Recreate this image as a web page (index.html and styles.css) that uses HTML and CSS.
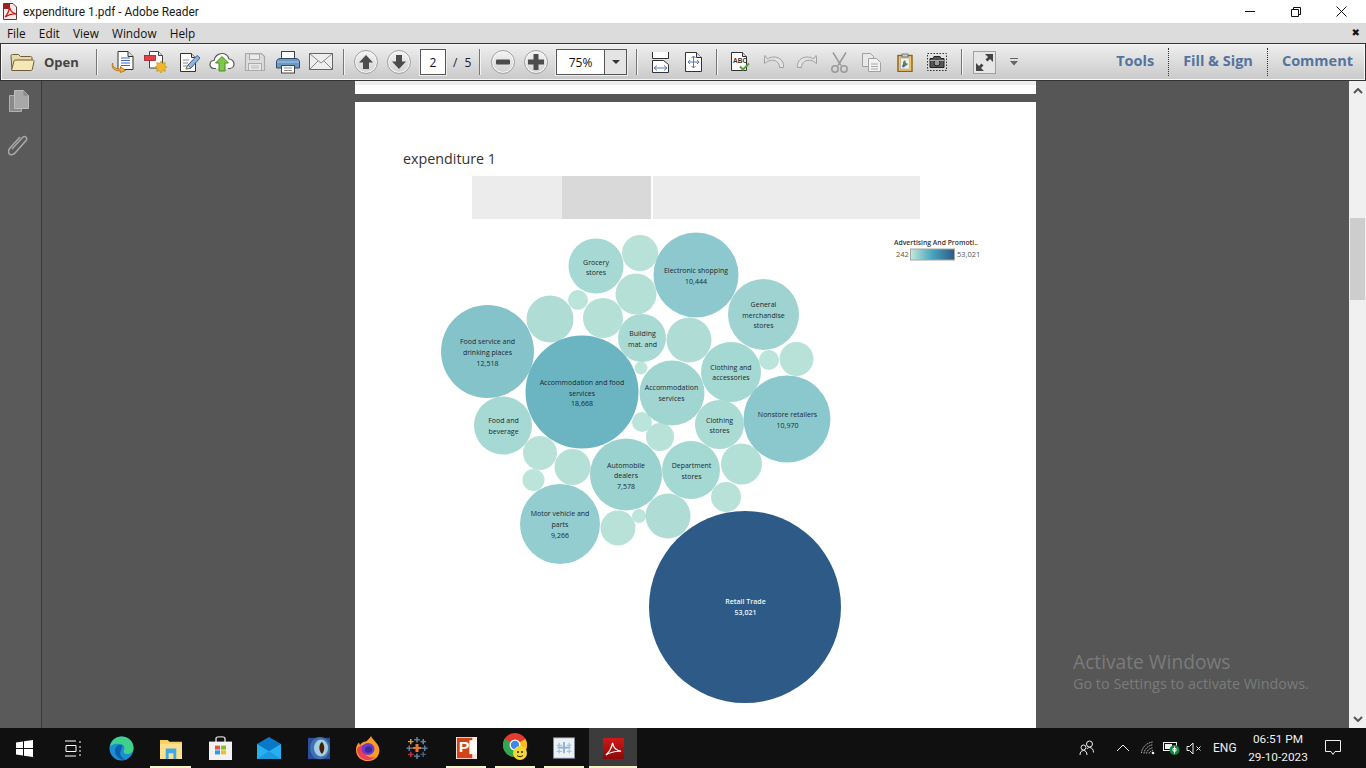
FILE: index.html
```html
<!DOCTYPE html>
<html lang="en">
<head>
<meta charset="utf-8">
<title>expenditure 1.pdf - Adobe Reader</title>
<link rel="stylesheet" href="styles.css">
</head>
<body>
<div class="app">
  <header class="titlebar">
    <svg class="app-icon" width="16" height="17" viewBox="0 0 16 17"><path d="M1.500 .5H11l3.500 3.500V16.500H1.500Z" fill="#f4ecec" stroke="#5a3a3a"/><path d="M1 1h7v5H1Z" fill="#9b2020"/><path d="M3 14c2-2 4-6 4.500-10 .5 3 2.500 6 6.500 7-3-.5-7 .5-11 3Z" fill="none" stroke="#c8201c" stroke-width="1.400"/></svg>
    <span class="title-text">expenditure 1.pdf - Adobe Reader</span>
    <div class="win-controls">
      <svg class="wc" width="46" height="22" viewBox="0 0 46 22"><path d="M18 10.500H28" stroke="#111"/></svg>
      <svg class="wc" width="46" height="22" viewBox="0 0 46 22"><path d="M18.500 8.500h7v7h-7ZM20.500 8.500v-2h7v7h-2" fill="none" stroke="#111"/></svg>
      <svg class="wc" width="46" height="22" viewBox="0 0 46 22"><path d="M17.500 5.500l10 10M27.500 5.500l-10 10" stroke="#111" fill="none"/></svg>
    </div>
  </header>

  <nav class="menubar">
    <span class="menu-item">File</span>
    <span class="menu-item">Edit</span>
    <span class="menu-item">View</span>
    <span class="menu-item">Window</span>
    <span class="menu-item">Help</span>
    <span class="doc-close">✖</span>
  </nav>

  <div class="toolbar">
    <div class="open-btn">
      <svg width="25" height="20" viewBox="0 0 25 20"><path d="M2 18.500L1 4c0-1 .5-1.500 1.500-1.500h6l2 2h10c1 0 1.500.5 1.500 1.500v2" fill="#e8d9a8" stroke="#6e5e38"/><path d="M2 18.500c0 0-.5-.5 0-2L4 9c.2-.7.7-1 1.500-1h17c1 0 1.700.5 1.500 1.500l-1.700 8c-.2.700-.7 1-1.500 1Z" fill="#f5e7b8" stroke="#6e5e38"/></svg>
      <span class="open-label">Open</span>
    </div>
    <i class="sep"></i>
    <div class="tb-group tb-first">
      <div class="tb"><svg width="24" height="22" viewBox="0 0 24 22"><path d="M7 .5h10l5 5V18.500H7Z" fill="#fff" stroke="#333"/><path d="M17 .5v5h5" fill="#ddd" stroke="#333"/><path d="M10 7h9M10 9.500h9M10 12h9M10 14.500h9" stroke="#3a6fc0" stroke-width="1.200"/><path d="M1.500 12c0 5 4 6 8 6v-2.500l5 4-5 2V20C4 20 0 18 1.500 12Z" fill="#f0b040" stroke="#a87010" stroke-width=".8"/></svg></div>
      <div class="tb"><svg width="24" height="22" viewBox="0 0 24 22"><path d="M5.500 .5h9l4 4V17H5.500Z" fill="#fff" stroke="#444"/><path d="M14.500 .5v4h4" fill="#ddd" stroke="#444"/><rect x=".5" y="4.500" width="11" height="5" fill="#e24048" stroke="#a02028" stroke-width=".8"/><path d="M17 10l1.500 2.500 2.800-.9-.6 2.900 2.300 1.500-2.300 1.500.6 2.900-2.800-.9L17 22l-1.500-2.500-2.800.9.600-2.900-2.300-1.500 2.300-1.500-.6-2.900 2.800.9Z" fill="#f0b828" stroke="#c08a10" stroke-width=".6"/></svg></div>
      <div class="tb"><svg width="24" height="22" viewBox="0 0 24 22"><path d="M3.500 2.500h11l4 4V20.500H3.500Z" fill="#fff" stroke="#333"/><path d="M14.500 2.500v4h4" fill="#ddd" stroke="#333"/><path d="M6 9h6M6 12h5M6 15h4" stroke="#888"/><path d="M9 18l2-4L20 4.500l3 2.500-9 10Z" fill="#8fb6df" stroke="#3a5f8a"/><path d="M9 18l2-4 3 3Z" fill="#eedcb0" stroke="#6a5a3a" stroke-width=".6"/></svg></div>
      <div class="tb"><svg width="26" height="22" viewBox="0 0 26 22"><path d="M7 17.500H5C2.500 17.500 1 15.500 1 13.500s1.500-4 4-4C5.500 5.500 9 2.500 13 2.500c3.500 0 6 2.500 7 5.500 3 0 5 2.500 5 5 0 2.500-2 4.500-4.500 4.500H19" fill="#fff" stroke="#555" stroke-width="1.200"/><path d="M13 5.500l6.500 6.500h-3.500v8h-6v-8H6.500Z" fill="#7cc84a" stroke="#4a8a24"/></svg></div>
      <div class="tb"><svg width="22" height="22" viewBox="0 0 22 22"><path d="M1.500 2.500h16l3 3v14h-19Z" fill="#dcdcdc" stroke="#aaa" stroke-width="1.200"/><rect x="5.500" y="3" width="10" height="5.500" fill="#ececec" stroke="#aaa"/><rect x="4.500" y="12.500" width="13" height="7" fill="#e8e8e8" stroke="#aaa"/><path d="M7 15h8M7 17h8" stroke="#bbb"/></svg></div>
      <div class="tb"><svg width="24" height="24" viewBox="0 0 24 24"><rect x="5.500" y="1.500" width="13" height="8" fill="#fff" stroke="#444"/><path d="M4 8.500h16c2 0 3.500 1.500 3.500 3.500v6h-23v-6c0-2 1.500-3.500 3.500-3.500Z" fill="#6f9ac4" stroke="#2f4f70"/><path d="M1 12h22" stroke="#a8c8e4"/><rect x="5.500" y="15.500" width="13" height="7.500" fill="#fff" stroke="#444"/><path d="M8 18h8M8 20.500h8" stroke="#888"/></svg></div>
      <div class="tb"><svg width="24" height="18" viewBox="0 0 24 18"><rect x=".5" y=".5" width="23" height="16" fill="#eee" stroke="#666"/><path d="M.5 .5L12 10 23.500 .5M.5 16.500L9 8M23.500 16.500L15 8" fill="none" stroke="#888"/></svg></div>
    </div>
    <i class="sep sep-b"></i>
    <div class="tb-group tb-nav">
      <div class="tb"><span class="round"><svg width="14" height="14" viewBox="0 0 14 14"><path d="M7 0l7 7.500H10V14H4V7.500H0Z" fill="#4c4c4c"/></svg></span></div>
      <div class="tb"><span class="round"><svg width="14" height="14" viewBox="0 0 14 14"><path d="M7 14L0 6.500H4V0h6v6.500h4Z" fill="#4c4c4c"/></svg></span></div>
    </div>
    <span class="page-box">2</span>
    <span class="page-of"><span>/</span><span>5</span></span>
    <i class="sep"></i>
    <div class="tb-group tb-zoom">
      <div class="tb"><span class="round"><svg width="14" height="14" viewBox="0 0 14 14"><rect y="4.500" width="14" height="5" rx="1" fill="#4c4c4c"/></svg></span></div>
      <div class="tb"><span class="round"><svg width="16" height="16" viewBox="0 0 16 16"><path d="M5.500 0h5v5.500H16v5h-5.500V16h-5v-5.500H0v-5h5.500Z" fill="#4c4c4c"/></svg></span></div>
    </div>
    <div class="zoom-box"><span class="zoom-val">75%</span><span class="zoom-drop"><svg width="8" height="4" viewBox="0 0 8 4"><path d="M0 0h8L4 4Z" fill="#333"/></svg></span></div>
    <i class="sep sep-d"></i>
    <div class="tb-group tb-fit">
      <div class="tb"><svg width="17" height="21" viewBox="0 0 17 21"><path d="M.5 0v6.500h16V0" fill="#fff" stroke="#333"/><path d="M.5 20.500V8.500h11l5 4v8Z" fill="#fff" stroke="#333"/><path d="M2 16h13M2 16l3-2.500M2 16l3 2.500M15 16l-3-2.500M15 16l-3 2.500" stroke="#5a78b8" fill="none"/></svg></div>
      <div class="tb"><svg width="17" height="20" viewBox="0 0 17 20"><path d="M.5 .5h11l5 5v14H.5Z" fill="#fff" stroke="#333"/><path d="M11.500 .5v5h5" fill="#ddd" stroke="#333"/><path d="M8.500 4v12M3 10h11M8.500 4l-2 2M8.500 4l2 2M8.500 16l-2-2M8.500 16l2-2M3 10l2-2M3 10l2 2M14 10l-2-2M14 10l-2 2" stroke="#5a78b8" fill="none"/></svg></div>
    </div>
    <i class="sep sep-e"></i>
    <div class="tb-group tb-edit">
      <div class="tb"><svg width="20" height="20" viewBox="0 0 20 20"><path d="M.5 .5h11l4 4v14H.5Z" fill="#fff" stroke="#333"/><path d="M11.500 .5v4h4" fill="#ddd" stroke="#333"/><text class="abc" x="2" y="11">ABC</text><path d="M9 14.500l3 3 6-6" fill="none" stroke="#58a040" stroke-width="2"/></svg></div>
      <div class="tb"><svg width="20" height="14" viewBox="0 0 20 14"><path d="M.5 1.500v7l2-1.500c3-2 7-2.500 10-.5 2 1.300 3 3.500 3 6h4c.5-4-1-7.500-5-9.500-4-1.800-8-1-11 1L1 .5Z" fill="#e2e2e2" stroke="#a0a0a0"/></svg></div>
      <div class="tb"><svg width="20" height="14" viewBox="0 0 20 14"><path d="M19.500 1.500v7l-2-1.500c-3-2-7-2.500-10-.5-2 1.300-3 3.500-3 6h-4c-.5-4 1-7.500 5-9.500 4-1.800 8-1 11 1L19 .5Z" fill="#e2e2e2" stroke="#a0a0a0"/></svg></div>
      <div class="tb"><svg width="17" height="21" viewBox="0 0 17 21"><path d="M2 .5l8 13M15 .5l-8 13" stroke="#9a9a9a" stroke-width="1.500"/><circle cx="4" cy="17" r="3.200" fill="none" stroke="#9a9a9a" stroke-width="1.500"/><circle cx="13" cy="17" r="3.200" fill="none" stroke="#9a9a9a" stroke-width="1.500"/></svg></div>
      <div class="tb"><svg width="19" height="19" viewBox="0 0 19 19"><path d="M.5 .5h8l3 3v10H.5Z" fill="#e8e8e8" stroke="#a0a0a0"/><path d="M6.500 5.500h8l4 4v9h-12Z" fill="#f2f2f2" stroke="#a0a0a0"/><path d="M9 11h7M9 13.500h7M9 16h7" stroke="#a8a8a8"/></svg></div>
      <div class="tb"><svg width="16" height="19" viewBox="0 0 16 19"><rect x="1" y="2.500" width="14" height="16" fill="#f0c868" stroke="#8a6410" stroke-width="1.400"/><rect x="3.500" y="5" width="9" height="11" fill="#eee" stroke="#999" stroke-width=".5"/><rect x="5" y="1" width="6" height="3" fill="#ccc" stroke="#666" stroke-width=".8"/><path d="M6 9l2-2 1 3 2 1-2 2H6Z" fill="#5a8a50"/><circle cx="6.500" cy="13" r="1.400" fill="#5060b0"/></svg></div>
      <div class="tb"><svg width="20" height="18" viewBox="0 0 20 18"><rect x=".5" y=".5" width="19" height="17" fill="none" stroke="#333" stroke-dasharray="1.500 1.500"/><path d="M3 5.500h3l1-2h6l1 2h3v9H3Z" fill="#555" stroke="#222"/><circle cx="10" cy="10" r="3" fill="#999" stroke="#222"/><path d="M3 7.500h14" stroke="#aaa"/></svg></div>
    </div>
    <i class="sep sep-f"></i>
    <div class="expand"><svg width="23" height="23" viewBox="0 0 23 23"><rect x=".5" y=".5" width="22" height="22" fill="#e6e6e6" stroke="#a0a0a0"/><path d="M20 3v8l-3-3-2.500 2.500-2-2L15 6l-3-3ZM3 20v-8l3 3 2.500-2.500 2 2L8 17l3 3Z" fill="#444"/></svg></div>
    <div class="more"><svg width="10" height="8" viewBox="0 0 10 8"><path d="M1 .5h8" stroke="#666"/><path d="M1 3h8L5 7.500Z" fill="#666"/></svg></div>
    <div class="panels">
      <span class="panel">Tools</span>
      <span class="panel panel-rule">Fill &amp; Sign</span>
      <span class="panel panel-rule">Comment</span>
    </div>
  </div>

  <main class="workspace">
    <aside class="sidebar">
      <svg class="side-icon" width="22" height="24" viewBox="0 0 22 24"><path d="M1.500 6.500h12v16h-12Z" fill="#8a8a8a" stroke="#b0b0b0"/><path d="M6.500 1.500h9l5 5v13h-14Z" fill="#a8a8a8" stroke="#bdbdbd"/><path d="M15.500 1.500v5h5" fill="#8a8a8a"/></svg>
      <svg class="side-icon clip" width="22" height="24" viewBox="0 0 22 24"><path d="M5 16L15.500 4.500c2-2 5-.5 4 2.500L8.500 19.500c-1.500 2-4.500 3-6 1.500s-1-4 .5-6L13 4" fill="none" stroke="#a8a8a8" stroke-width="1.500" transform="translate(-1 0)"/></svg>
    </aside>
    <div class="viewer">
      <div class="page-tail"></div>
      <section class="page">
        <h1 class="doc-title">expenditure 1</h1>
        <div class="filter-bar">
          <span class="fb-a"></span><span class="fb-b"></span><span class="fb-c"></span>
        </div>
        <svg class="chart" width="681" height="490" viewBox="355 225 681 490">
          <g>
            <circle cx="640" cy="253" r="18" fill="#b8e2d8"/>
            <circle cx="636" cy="294" r="20.500" fill="#b5e0d6"/>
            <circle cx="578" cy="300" r="10" fill="#bbe4da"/>
            <circle cx="550" cy="319" r="23.500" fill="#afdcd5"/>
            <circle cx="603" cy="318" r="20" fill="#b5e0d6"/>
            <circle cx="689" cy="340" r="22.500" fill="#afdcd5"/>
            <circle cx="641" cy="368" r="6.500" fill="#bde5da"/>
            <circle cx="769" cy="360" r="10" fill="#bbe4da"/>
            <circle cx="796.500" cy="359" r="17" fill="#b8e2d8"/>
            <circle cx="642" cy="422" r="10" fill="#bbe4da"/>
            <circle cx="660" cy="437" r="14" fill="#b8e2d8"/>
            <circle cx="540" cy="453" r="17" fill="#b8e2d8"/>
            <circle cx="572.500" cy="467" r="18" fill="#b5e0d6"/>
            <circle cx="533.500" cy="480" r="11" fill="#bbe4da"/>
            <circle cx="741.500" cy="464" r="20.500" fill="#b2dfd6"/>
            <circle cx="726" cy="497" r="15" fill="#b8e2d8"/>
            <circle cx="618" cy="528" r="17.500" fill="#b8e2d8"/>
            <circle cx="639" cy="516" r="7" fill="#bde5da"/>
            <circle cx="668" cy="516" r="22.500" fill="#afdcd5"/>
            <circle cx="596" cy="266" r="27.500" fill="#a6d9d3"/>
            <circle cx="696" cy="275" r="42.500" fill="#8cc8ce"/>
            <circle cx="763.500" cy="314.500" r="35.500" fill="#9ed3d2"/>
            <circle cx="642" cy="338" r="24" fill="#a9dad4"/>
            <circle cx="487.500" cy="351.500" r="46.500" fill="#85c3cb"/>
            <circle cx="582" cy="392" r="56.500" fill="#6bb4c2"/>
            <circle cx="672" cy="393" r="32.500" fill="#a0d5d2"/>
            <circle cx="731" cy="372" r="30" fill="#a4d8d3"/>
            <circle cx="787" cy="419" r="43.500" fill="#8bc8ce"/>
            <circle cx="719.500" cy="424.500" r="24.500" fill="#aadbd4"/>
            <circle cx="503" cy="425.500" r="29" fill="#a6d9d3"/>
            <circle cx="626" cy="474.500" r="36" fill="#9ad2d0"/>
            <circle cx="691" cy="470" r="29" fill="#a4d8d3"/>
            <circle cx="560" cy="524" r="40" fill="#93cdd0"/>
            <circle cx="745" cy="607" r="96" fill="#2d5a87"/>
          </g>
          <g class="labels">
            <text x="596" y="265">Grocery</text><text x="596" y="275">stores</text>
            <text x="696" y="273">Electronic shopping</text><text x="696" y="284">10,444</text>
            <text x="763.500" y="307">General</text><text x="763.500" y="318">merchandise</text><text x="763.500" y="328">stores</text>
            <text x="642.500" y="336">Building</text><text x="642.500" y="347">mat. and</text>
            <text x="487.500" y="344">Food service and</text><text x="487.500" y="355">drinking places</text><text x="487.500" y="366">12,518</text>
            <text x="582" y="385">Accommodation and food</text><text x="582" y="396">services</text><text x="582" y="406">18,668</text>
            <text x="671.500" y="390">Accommodation</text><text x="671.500" y="401">services</text>
            <text x="731" y="370">Clothing and</text><text x="731" y="380">accessories</text>
            <text x="787.500" y="417">Nonstore retailers</text><text x="787.500" y="428">10,970</text>
            <text x="719.500" y="423">Clothing</text><text x="719.500" y="433">stores</text>
            <text x="503.500" y="423">Food and</text><text x="503.500" y="434">beverage</text>
            <text x="626" y="468">Automobile</text><text x="626" y="478">dealers</text><text x="626" y="489">7,578</text>
            <text x="691.500" y="468">Department</text><text x="691.500" y="479">stores</text>
            <text x="560" y="516">Motor vehicle and</text><text x="560" y="527">parts</text><text x="560" y="538">9,266</text>
            <text class="on-dark" x="745.500" y="604">Retail Trade</text><text class="on-dark" x="745.500" y="615">53,021</text>
          </g>
          <defs>
            <linearGradient id="legend-grad" x1="0" x2="1" y1="0" y2="0">
              <stop offset="0" stop-color="#c4e8de"/><stop offset=".5" stop-color="#47a3bb"/><stop offset="1" stop-color="#2d5a87"/>
            </linearGradient>
          </defs>
          <text class="legend-title" x="894" y="245">Advertising And Promoti..</text>
          <text class="legend-num" x="896" y="257">242</text>
          <rect x="910.500" y="249" width="44" height="11" fill="url(#legend-grad)" stroke="#a8a8a0"/>
          <text class="legend-num" x="957" y="257">53,021</text>
        </svg>
      </section>
      <div class="activate">
        <div class="activate-big">Activate Windows</div>
        <div class="activate-small">Go to Settings to activate Windows.</div>
      </div>
    </div>
    <div class="scrollbar">
      <svg class="sb-arrow" width="10" height="6" viewBox="0 0 10 6"><path d="M1 5l4-4 4 4" fill="none" stroke="#555" stroke-width="2"/></svg>
      <div class="sb-track"><div class="sb-thumb"></div></div>
      <svg class="sb-arrow" width="10" height="6" viewBox="0 0 10 6"><path d="M1 1l4 4 4-4" fill="none" stroke="#555" stroke-width="2"/></svg>
    </div>
  </main>

  <footer class="taskbar">
    <div class="task start"><svg width="17" height="17" viewBox="0 0 17 17"><path d="M0 2.500L7 1.500V8H0ZM8 1.300L17 0V8H8ZM0 9h7v6.500L0 14.500ZM8 9h9v8L8 15.700Z" fill="#fff"/></svg></div>
    <div class="task"><svg width="16" height="17" viewBox="0 0 16 17"><path d="M0 1h11M0 16h11M1 5.500h10v6H1ZM15 1v2M15 6v2M15 10v2M15 14v2" fill="none" stroke="#fff"/></svg></div>
    <div class="task"><svg width="25" height="25" viewBox="0 0 25 25"><circle cx="12.500" cy="12.500" r="12" fill="#1b8fd6"/><path d="M1 11C2 4 7 .5 12.500 .5 19 .5 24.500 5 24.500 12c0 4-3 6-6.500 6-3 0-4-2-3-4 .8-1.500 1-4-2-5.500C9 7 3 7.500 1 11Z" fill="#3fd08a"/><path d="M13 9c-4-1-7 2-7 6 0 5 5 9 10 9-4-3-6-6-4-10 .5-1 1.500-3 1-5Z" fill="#0c5fa8"/></svg></div>
    <div class="task running"><svg width="22" height="21" viewBox="0 0 23 22" preserveAspectRatio="none"><path d="M0 2h8l2 2h13v18H0Z" fill="#f4cf62"/><path d="M0 6h23v16H0Z" fill="#fae08c"/><path d="M6 11h11v11H6Z" fill="#3fa8e8"/><path d="M9 16h5v6H9Z" fill="#fae08c"/></svg></div>
    <div class="task"><svg width="23" height="24" viewBox="0 0 23 30" preserveAspectRatio="none"><path d="M7 8V3.500C7 2 8 1 9.500 1h4C15 1 16 2 16 3.500V8" fill="none" stroke="#ccc" stroke-width="1.500"/><rect y="7" width="23" height="23" fill="#f2f2f2"/><rect x="6" y="12" width="5" height="5" fill="#e8543a"/><rect x="12" y="12" width="5" height="5" fill="#7cc030"/><rect x="6" y="18" width="5" height="5" fill="#1e9fe8"/><rect x="12" y="18" width="5" height="5" fill="#f8bc20"/></svg></div>
    <div class="task"><svg width="24" height="22" viewBox="0 0 24 28" preserveAspectRatio="none"><path d="M0 9L12 0l12 9v19H0Z" fill="#0a78c8"/><path d="M0 9l12 9 12-9v19H0Z" fill="#26b0f0"/><path d="M0 28l12-10 12 10Z" fill="#1c98e0"/></svg></div>
    <div class="task"><svg width="22" height="23" viewBox="0 0 22 27" preserveAspectRatio="none"><rect y="1" width="22" height="25" fill="#2c4c9c"/><ellipse cx="12" cy="13" rx="10" ry="13" fill="#3f74b0"/><ellipse cx="13" cy="13" rx="7" ry="10" fill="#a8cce0"/><path d="M14 6c-3 2-4 10 0 14 3-4 3-10 0-14Z" fill="#40200c"/></svg></div>
    <div class="task"><svg width="24" height="25" viewBox="0 0 24 27" preserveAspectRatio="none"><path d="M15 0c1 3 5 6 7 10 2 4 2 9-1 13-2 2.500-5 4-9 4C5 27 0 22 0 15c0-3 1-6 3-8l1 3c1-2 3-4 6-4 2-2 4-4 5-6Z" fill="#fb9a24"/><path d="M1 14c0 7 5 12 11 12 3 0 5-1 7-3-5 1-9-1-11-5-1-3 0-6 2-8-3-1-7 0-9 4Z" fill="#ee3d5c"/><circle cx="12" cy="14" r="6.500" fill="#6c3bc8"/><circle cx="12.500" cy="14.500" r="3.500" fill="#3b2a9c"/></svg></div>
    <div class="task"><svg width="24" height="24" viewBox="0 0 24 24"><path d="M10.500 8h3v3h3v2h-3v3h-3v-3h-3v-2h3Z" fill="#e8762c"/><path d="M11.200 1h1.600v2h2v1.400h-2v2h-1.600v-2h-2V3h2ZM11.200 17.500h1.600v2h2V21h-2v2h-1.600v-2h-2v-1.500h2ZM3.500 9.500h1.500v2h2V13H5v2H3.500v-2h-2v-1.500h2ZM19 9.500h1.500v2h2V13h-2v2H19v-2h-2v-1.500h2Z" fill="#5a7f9e"/><path d="M5 3h1.500v2h2v1.300h-2v2H5v-2H3V5h2Z" fill="#e0a030"/><path d="M17.500 3H19v2h2v1.300h-2v2h-1.500v-2h-2V5h2Z" fill="#5a8fb0"/><path d="M5 15.700h1.500v2h2V19h-2v2H5v-2H3v-1.300h2Z" fill="#b8324a"/><path d="M17.500 15.700H19v2h2V19h-2v2h-1.500v-2h-2v-1.300h2Z" fill="#4a5a80"/></svg></div>
    <div class="task running"><svg width="21" height="22" viewBox="0 0 22 27" preserveAspectRatio="none"><rect width="22" height="27" fill="#f8e8e0"/><rect x="1" y="1" width="16" height="25" fill="#d0441c"/><rect x="14" y="4" width="8" height="17" fill="#fff"/><text class="ppt" x="3" y="19">P</text></svg></div>
    <div class="task running"><svg width="25" height="30" viewBox="0 0 25 30"><circle cx="12" cy="12" r="12" fill="#e33b2e"/><path d="M12 12L22.400 6A12 12 0 0 1 12 24Z" fill="#fbc116"/><path d="M12 12L12 24A12 12 0 0 1 1.600 6Z" fill="#2fa84f"/><circle cx="12" cy="12" r="5.500" fill="#fff"/><circle cx="12" cy="12" r="4.200" fill="#3f86f0"/><circle cx="17" cy="20" r="7" fill="#f6d832"/><circle cx="15" cy="19" r="1" fill="#222"/><circle cx="19" cy="19" r="1" fill="#222"/><path d="M14 22.500c1.500 1.500 4.500 1.500 6 0" stroke="#222" fill="none"/></svg></div>
    <div class="task running"><svg width="22" height="22" viewBox="0 0 24 27" preserveAspectRatio="none"><rect x=".5" y="1" width="23" height="25" fill="#eaf2f8" stroke="#889"/><path d="M11 6h2v6h6v2h-6v6h-2v-6H5v-2h6Z" fill="#8cb0d0"/><path d="M6 7h1.500v2.500H10V11H7.500v2H6v-2H4V9.500h2ZM17 7h1.500v2.500H20V11h-1.500v2H17v-2h-2V9.500h2ZM6 15h1.500v2H10v1.300H7.500v2H6v-2H4V17h2ZM17 15h1.500v2H20v1.300h-1.500v2H17v-2h-2V17h2Z" fill="#a8c4dc"/></svg></div>
    <div class="task running active"><svg width="21" height="21" viewBox="0 0 22 26" preserveAspectRatio="none"><defs><linearGradient id="acro" x1="0" x2="0" y1="0" y2="1"><stop offset="0" stop-color="#d01818"/><stop offset="1" stop-color="#8c0808"/></linearGradient></defs><rect width="22" height="26" fill="url(#acro)"/><path d="M3 21c3-3 6-9 7-15 .5 5 3 9 9 10.500-5-.5-11 1-16 4.500Z" fill="none" stroke="#fff" stroke-width="1.300"/></svg></div>

    <div class="tray">
      <svg class="tray-ic tray-people" width="16" height="16" viewBox="0 0 16 16"><circle cx="10.500" cy="4" r="3" fill="none" stroke="#eee"/><circle cx="4.500" cy="7.500" r="2.500" fill="none" stroke="#eee"/><path d="M1 15c0-3 1.500-4.500 3.500-4.500S8 12 8 15M8 9c.5-1 1.500-1.500 2.500-1.500 2.500 0 4 2 4 5" fill="none" stroke="#eee"/></svg>
      <svg class="tray-ic tray-chev" width="14" height="8" viewBox="0 0 14 8"><path d="M1 7l6-6 6 6" fill="none" stroke="#eee"/></svg>
      <svg class="tray-ic tray-wifi" width="14" height="14" viewBox="0 0 14 14"><path d="M.5 12C1 6 6 1.500 12 1M3 12.500C3.500 8 7.500 4 12 3.800M5.500 12.500c.5-3 3-5.500 6.500-5.700M8 12.500c.3-1.500 1.500-2.700 4-3" fill="none" stroke="#bbb" stroke-dasharray="1.400 .8"/><circle cx="12" cy="12" r="1.300" fill="#eee"/></svg>
      <svg class="tray-ic tray-batt" width="17" height="14" viewBox="0 0 17 14"><rect x=".5" y="1.500" width="13" height="8" fill="#111" stroke="#eee"/><rect x="2" y="3" width="7" height="5" fill="#eee"/><circle cx="11.500" cy="9" r="5" fill="#128a3c"/><path d="M11.500 5.500v7M10 7.500h3v2.500h-3Z" stroke="#fff" fill="none"/></svg>
      <svg class="tray-ic tray-vol" width="16" height="13" viewBox="0 0 16 13"><path d="M1 4.500h2.500L7 1v11L3.500 8.500H1Z" fill="none" stroke="#eee"/><path d="M10.500 4.500l4 4M14.500 4.500l-4 4" stroke="#eee"/></svg>
      <span class="tray-lang">ENG</span>
      <div class="clock"><span>06:51 PM</span><span>29-10-2023</span></div>
      <svg class="tray-ic tray-note" width="16" height="16" viewBox="0 0 16 16"><path d="M.5 .5h15v11H10L8 14.500 6 11.500H.5Z" fill="none" stroke="#eee"/></svg>
    </div>
  </footer>
</div>
</body>
</html>
```

FILE: styles.css
```css
* { box-sizing: border-box; }
html, body { margin: 0; padding: 0; height: 100%; overflow: hidden; }
body { font-family: "Open Sans", "Noto Sans", sans-serif; background: #fff; color: #111; }
svg { display: block; flex: none; }
.app { width: 1366px; height: 768px; display: flex; flex-direction: column; }

.titlebar { height: 23px; background: #fff; display: flex; align-items: center; padding-left: 2px; }
.app-icon { margin-right: 5px; }
.title-text { font-family: Roboto, "Open Sans", sans-serif; font-size: 11.900px; color: #1a1a1a; }
.win-controls { margin-left: auto; display: flex; padding-right: 1px; }
.wc { width: 46px; }

.menubar { height: 20px; background: #dcdcdc; display: flex; align-items: center; padding-left: 7px; font-size: 11.800px; color: #111; }
.menu-item { margin-right: 13.200px; }
.doc-close { margin-left: auto; margin-right: 6px; font-size: 10px; line-height: 1; color: #111; font-family: "DejaVu Sans", sans-serif; }

.toolbar { height: 38px; display: flex; align-items: center; border: 1px solid #333; background: linear-gradient(#efefef, #c9c9c9); box-shadow: inset 0 0 0 1px #f6f6f6; }
.open-btn { width: 95px; display: flex; align-items: center; padding-left: 9px; }
.open-label { margin-left: 9px; font-weight: 700; font-size: 13px; color: #444; }
.sep { width: 2px; height: 26px; background: linear-gradient(90deg, #777 50%, #f4f4f4 50%); flex: none; }
.tb-group { display: flex; }
.tb { width: 33px; height: 30px; display: flex; align-items: center; justify-content: center; }
.tb-first { margin-left: 8px; }
.sep-b { margin-left: 6px; }
.tb-nav { margin-left: 4px; }
.round { width: 24px; height: 24px; border-radius: 50%; border: 1px solid #a0a0a0; background: linear-gradient(#f4f4f4, #d2d2d2); display: flex; align-items: center; justify-content: center; box-shadow: inset 0 0 0 1px #f8f8f8; }
.page-box { width: 26px; height: 26px; margin-left: 5px; background: #fff; border: 1px solid #555; box-shadow: 0 0 0 1px #eee; display: flex; align-items: center; justify-content: center; font-size: 12px; flex: none; }
.page-of { width: 33px; display: flex; font-size: 12px; padding-left: 7px; gap: 7px; color: #222; }
.tb-zoom { margin-left: 5px; }
.zoom-box { width: 71px; height: 26px; margin-left: 4px; display: flex; background: #fff; border: 1px solid #555; box-shadow: 0 0 0 1px #eee; flex: none; }
.zoom-val { width: 47px; font-size: 12px; display: flex; align-items: center; justify-content: center; }
.zoom-drop { flex: 1; border-left: 1px solid #555; background: #e4e4e4; display: flex; align-items: center; justify-content: center; }
.sep-d { margin-left: 9px; }
.tb-fit { margin-left: 6px; }
.sep-e { margin-left: 6px; }
.tb-edit { margin-left: 7px; }
.tb-edit .tb { width: 32.670px; }
.sep-f { margin-left: 7px; }
.abc { font-family: "Liberation Sans", sans-serif; font-size: 6.500px; font-weight: 700; fill: #333; }
.ppt { font-family: "Liberation Sans", sans-serif; font-size: 17px; font-weight: 700; fill: #fff; }
.expand { margin-left: 10px; }
.more { margin-left: 13px; }
.panels { margin-left: auto; display: flex; align-items: center; padding-right: 12px; font-weight: 700; font-size: 14.500px; color: #53749f; height: 28px; }
.panel { display: flex; align-items: center; height: 28px; padding: 0 14px 3px; }
.panel:last-child { padding-right: 0; }
.panel-rule { border-left: 1px dotted #333; }

.workspace { flex: 1; display: flex; min-height: 0; }
.sidebar { width: 42px; background: #5a5a5a; border-right: 1px solid #3a3a3a; display: flex; flex-direction: column; align-items: center; padding-top: 8px; flex: none; }
.side-icon { margin-left: -3px; }
.clip { margin-top: 20px; }
.viewer { flex: 1; position: relative; background: #565656; display: flex; flex-direction: column; align-items: flex-start; padding-left: 313px; overflow: hidden; }
.page-tail { width: 681px; height: 13px; background: linear-gradient(#eee 4px, #fff 4px); flex: none; }
.page { width: 681px; margin-top: 8px; background: #fff; flex: 1; padding-top: 47px; display: flex; flex-direction: column; }
.doc-title { margin: 0 0 0 48px; font-weight: 400; font-size: 14.300px; line-height: 20px; color: #333; }
.filter-bar { margin: 7px 0 0 117px; width: 448px; height: 43px; display: flex; background: #ececec; flex: none; }
.fb-a { width: 90px; }
.fb-b { width: 89px; background: #d9d9d9; }
.fb-c { flex: 1; border-left: 2px solid #fff; }
.chart { margin-top: 6px; }
.labels text { font-family: "Open Sans", sans-serif; font-size: 7px; fill: #20282d; text-anchor: middle; }
.labels .on-dark { fill: #f0f4f8; font-weight: 600; }
.legend-title { font-family: "Open Sans", sans-serif; font-size: 6.800px; font-weight: 600; fill: #333; }
.legend-num { font-family: "Open Sans", sans-serif; font-size: 7.500px; fill: #555; }
.activate { position: absolute; left: 1031px; top: 568px; color: #7b7b7b; }
.activate-big { font-size: 19.200px; line-height: 25px; }
.activate-small { font-size: 14.400px; line-height: 20px; white-space: nowrap; }

.scrollbar { width: 17px; background: #f0f0f0; display: flex; flex-direction: column; align-items: center; padding: 7px 0 6px; flex: none; }
.sb-track { flex: 1; width: 100%; padding: 124px 1px 0; }
.sb-thumb { height: 82px; background: #cdcdcd; }

.taskbar { height: 40px; background: #101010; display: flex; align-items: center; position: relative; }
.task { width: 49.200px; height: 40px; display: flex; align-items: center; justify-content: center; flex: none; position: relative; }
.start { width: 48px; }
.running::after { content: ""; position: absolute; left: 4px; right: 5px; bottom: 0; height: 2px; background: #f4f4c8; }
.active { background: #3c3c3c; width: 48px; }
.active::after { left: 0; right: 0; }
.tray { margin-left: auto; display: flex; align-items: center; height: 40px; color: #eee; font-family: Roboto, "Open Sans", sans-serif; }
.tray-people { margin-right: 21px; }
.tray-chev { margin-right: 11px; }
.tray-wifi { margin-right: 8px; }
.tray-batt { margin-right: 6px; }
.tray-vol { margin-right: 11px; }
.tray-lang { font-size: 12px; width: 30px; }
.clock { display: flex; flex-direction: column; align-items: center; font-size: 11.800px; line-height: 18px; width: 70px; }
.tray-note { margin-left: 12px; margin-right: 25px; }
```
